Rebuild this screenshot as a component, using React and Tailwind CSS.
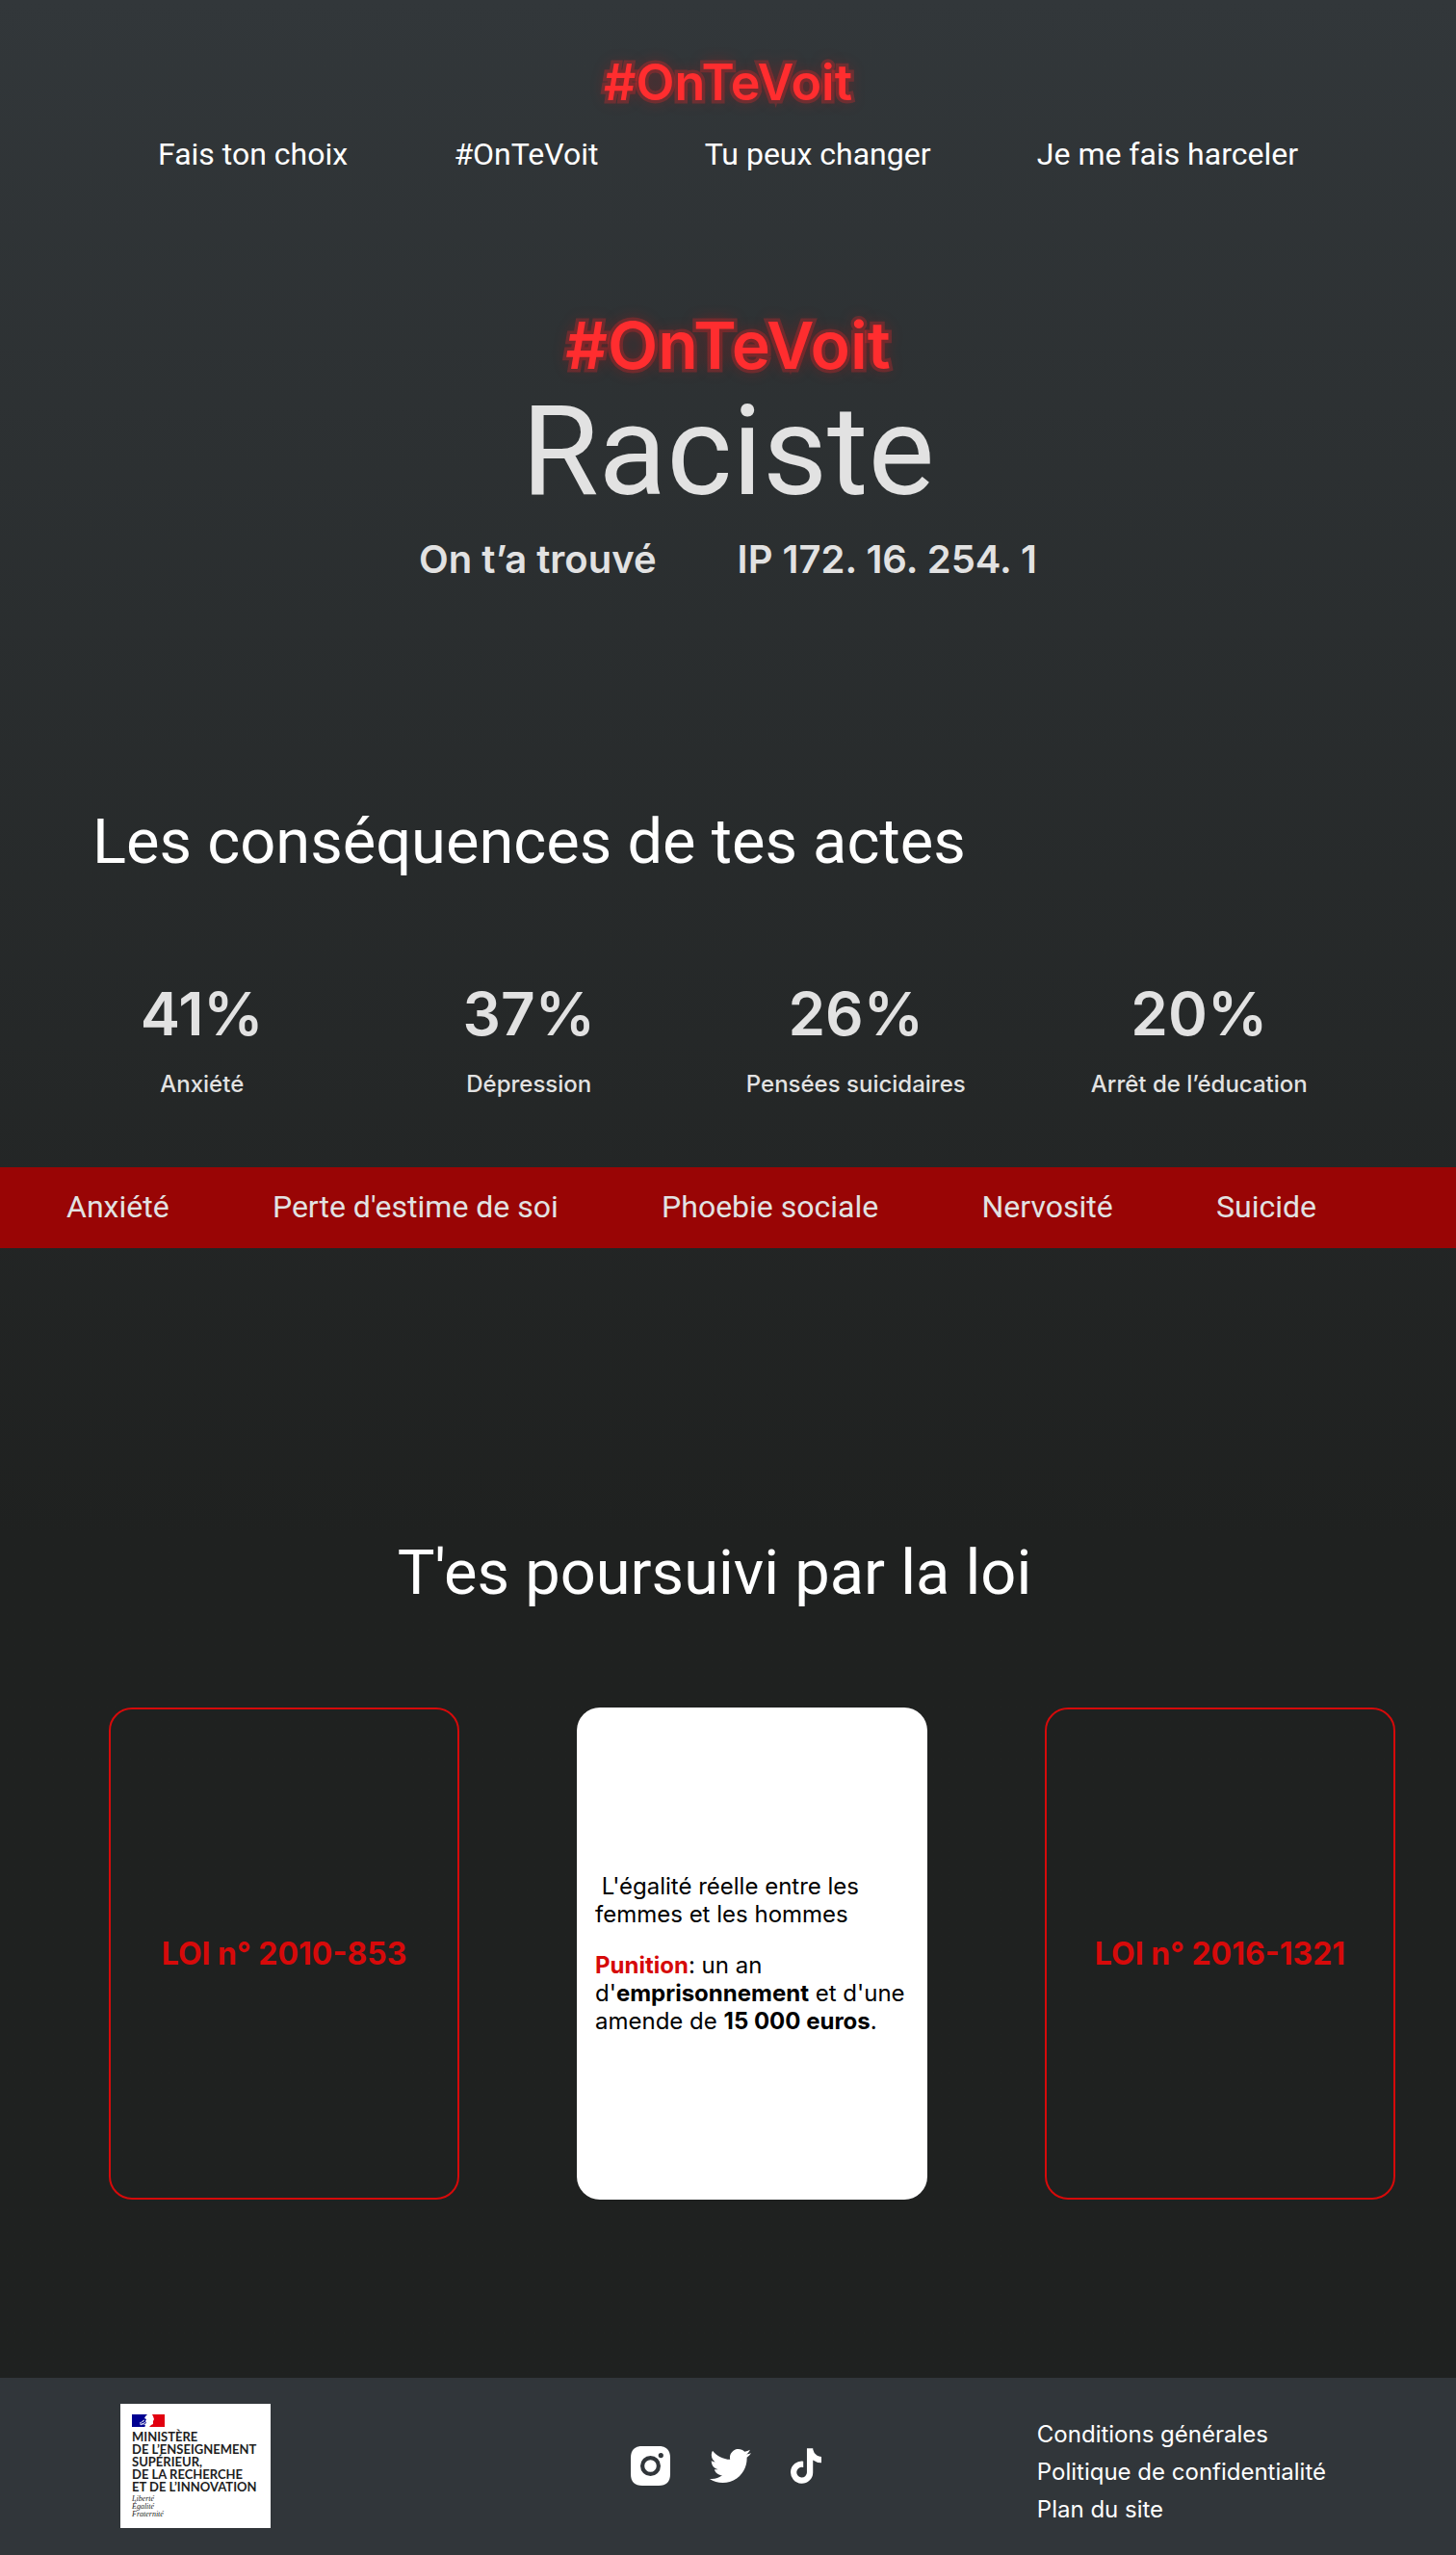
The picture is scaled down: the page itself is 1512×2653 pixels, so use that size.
import { FaTwitter, FaTiktok } from "react-icons/fa";

const navLinks = ["Fais ton choix", "#OnTeVoit", "Tu peux changer", "Je me fais harceler"];

const stats = [
  { value: "41%", label: "Anxiété" },
  { value: "37%", label: "Dépression" },
  { value: "26%", label: "Pensées suicidaires" },
  { value: "20%", label: "Arrêt de l’éducation" },
];

const effects = ["Anxiété", "Perte d'estime de soi", "Phoebie sociale", "Nervosité", "Suicide"];

const legalLinks = ["Conditions générales", "Politique de confidentialité", "Plan du site"];

const display = "font-['Roboto',sans-serif]";
const neon =
  "font-semibold text-[#ff2d2f] [-webkit-text-stroke:7px_rgba(255,45,47,0.25)] [paint-order:stroke_fill] [text-shadow:0_0_16px_rgba(255,0,0,0.35)]";

function InstagramIcon() {
  return (
    <svg viewBox="0 0 41 41" className="h-[41px] w-[41px]" fill="currentColor" aria-hidden="true">
      <path
        fillRule="evenodd"
        d="M12 0h17c8 0 12 4 12 12v17c0 8-4 12-12 12H12C4 41 0 37 0 29V12C0 4 4 0 12 0Zm8.500 10a10.500 10.500 0 1 0 0 21a10.500 10.500 0 1 0 0-21Zm0 4.200a6.300 6.300 0 1 1 0 12.600a6.300 6.300 0 1 1 0-12.600ZM31.300 7a2.600 2.600 0 1 0 0 5.200a2.600 2.600 0 1 0 0-5.200Z"
      />
    </svg>
  );
}

function LawCard({ children }) {
  return (
    <button
      type="button"
      className="min-h-[511px] rounded-3xl border-2 border-[#d60a0a] text-center text-[32px] leading-[39px] font-bold text-[#d60a0a]"
    >
      {children}
    </button>
  );
}

function MinistryLogo() {
  return (
    <div className="flex h-[129px] w-[156px] flex-col bg-white pt-[11px] pl-3 text-[#1e1e1e]">
      <svg viewBox="0 0 34 13" className="h-[13px] w-[34px] shrink-0" aria-hidden="true">
        <path fill="#000091" d="M0 0h16l-2 2-1 2 2 1-1 2 1 2-2 1 1 2-1 1H0Z" />
        <path fill="#e1000f" d="M21 0h13v13H18l2-2 2-1v-3l1-2-1-3Z" />
        <path stroke="#fff" strokeWidth="0.8" fill="none" d="M8 9l4-2M9 11l5-3M11 7l2-1M8 10h5" />
      </svg>
      <p className="mt-1 text-[13px] leading-[13px] font-bold whitespace-nowrap font-['Lato',sans-serif]">
        MINISTÈRE
        <br />
        DE L’ENSEIGNEMENT
        <br />
        SUPÉRIEUR,
        <br />
        DE LA RECHERCHE
        <br />
        ET DE L’INNOVATION
      </p>
      <p className="mt-0.5 text-[8px] leading-[8px] italic font-['Liberation_Serif',serif]">
        Liberté
        <br />
        Égalité
        <br />
        Fraternité
      </p>
    </div>
  );
}

export default function App() {
  return (
    <div className="w-full bg-linear-to-b from-[#32373a] to-[#1f2120] to-60% font-['Inter',sans-serif] text-white">
      <header className="flex flex-col gap-[26px] pt-[57px]">
        <a href="#" className={`${neon} self-center text-[52px] leading-[58px]`}>
          #OnTeVoit
        </a>
        <nav className={`${display} flex justify-between px-[164px] text-[32px] leading-[38px]`}>
          {navLinks.map((t) => (
            <a key={t} href="#">
              {t}
            </a>
          ))}
        </nav>
      </header>

      <main>
        <section className="flex flex-col items-center pt-[141px] text-[#e2e2e2]">
          <p className={`${neon} text-[68px] leading-[77px]`}>#OnTeVoit</p>
          <h1 className={`${display} text-[130px] leading-[144px]`}>Raciste</h1>
          <div className="mt-4 flex gap-[84px] text-[40px] leading-[48px] font-semibold">
            <p>On t’a trouvé</p>
            <p>IP 172. 16. 254. 1</p>
          </div>
        </section>

        <section className="pt-[231px]">
          <h2 className={`${display} pl-24 text-[65px] leading-[76px]`}>Les conséquences de tes actes</h2>
          <div className="mt-[102px] grid grid-cols-[1fr_1fr_1fr_1.1fr] pr-20 pl-10 text-center text-[#e2e2e2]">
            {stats.map((s) => (
              <div key={s.label}>
                <p className="text-[62px] leading-[77px] font-semibold">{s.value}</p>
                <p className="mt-5 text-[24px] leading-[29px] font-medium">{s.label}</p>
              </div>
            ))}
          </div>
        </section>

        <ul
          className={`${display} mt-[72px] flex justify-between bg-[#990505] pt-[22px] pr-[145px] pb-6 pl-[69px] text-[32px] leading-[38px] text-[#e2e2e2]`}
        >
          {effects.map((t) => (
            <li key={t}>{t}</li>
          ))}
        </ul>

        <section className="pt-[299px] pb-[185px]">
          <h2 className={`${display} pr-7 text-center text-[65px] leading-[76px]`}>T'es poursuivi par la loi</h2>
          <div className="mt-[102px] grid grid-cols-3 gap-[122px] pr-[63px] pl-[113px]">
            <LawCard>LOI n° 2010-853</LawCard>
            <article className="flex min-h-[511px] flex-col justify-center gap-6 rounded-3xl bg-white pr-4 pl-[19px] text-[24px] leading-[29px] text-black">
              <p>&nbsp;L'égalité réelle entre les femmes et les hommes</p>
              <p>
                <strong className="text-[#d60a0a]">Punition</strong>: un an d'<strong>emprisonnement</strong> et d'une
                amende de <strong>15 000 euros</strong>.
              </p>
            </article>
            <LawCard>LOI n° 2016-1321</LawCard>
          </div>
        </section>
      </main>

      <footer className="grid grid-cols-[1fr_auto_1fr] items-center bg-[#31363a] pt-[27px] pb-7">
        <div className="pl-[125px]">
          <MinistryLogo />
        </div>
        <div className="flex items-center gap-[41px] pr-[5px]">
          <a href="#" aria-label="Instagram">
            <InstagramIcon />
          </a>
          <a href="#" aria-label="Twitter">
            <FaTwitter className="h-[43px] w-[43px]" />
          </a>
          <a href="#" aria-label="TikTok">
            <FaTiktok className="h-[37px] w-8" />
          </a>
        </div>
        <ul className="flex flex-col gap-2.5 justify-self-end pt-3 pr-[135px] text-[24px] leading-[29px]">
          {legalLinks.map((t) => (
            <li key={t}>
              <a href="#">{t}</a>
            </li>
          ))}
        </ul>
      </footer>
    </div>
  );
}
